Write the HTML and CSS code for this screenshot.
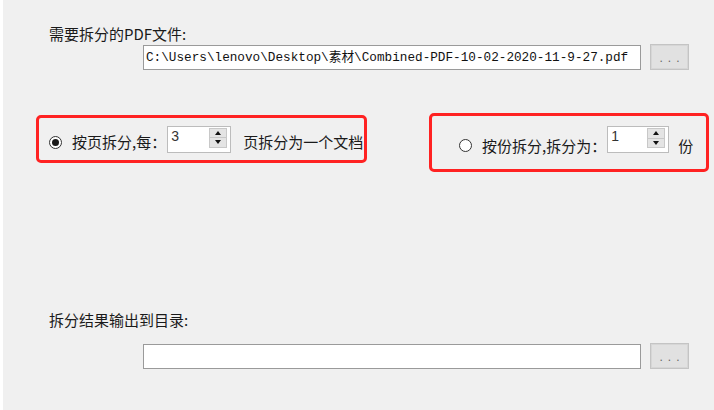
FILE: index.html
```html
<!DOCTYPE html>
<html lang="zh-CN">
<head>
<meta charset="utf-8">
<title>PDF拆分</title>
<link rel="stylesheet" href="styles.css">
</head>
<body>
<div class="page">
  <div class="label label-src">需要拆分的PDF文件:</div>
  <div class="file-row">
    <div class="path-input">C:\Users\lenovo\Desktop\素材\Combined-PDF-10-02-2020-11-9-27.pdf</div>
    <div class="browse-btn">...</div>
  </div>

  <div class="options">
    <div class="opt opt-page">
      <span class="radio checked"></span>
      <span class="opt-text">按页拆分,每：</span>
      <div class="spinner spinner-page">
        <span class="spin-value">3</span>
        <span class="spin-btns">
          <span class="spin-up"></span>
          <span class="spin-down"></span>
        </span>
      </div>
      <span class="opt-text after-page">页拆分为一个文档</span>
    </div>
    <div class="opt opt-copy">
      <span class="radio"></span>
      <span class="opt-text">按份拆分,拆分为：</span>
      <div class="spinner spinner-copy">
        <span class="spin-value">1</span>
        <span class="spin-btns">
          <span class="spin-up"></span>
          <span class="spin-down"></span>
        </span>
      </div>
      <span class="opt-text after-copy">份</span>
    </div>
  </div>

  <div class="label label-out">拆分结果输出到目录:</div>
  <div class="file-row out-row">
    <div class="path-input"></div>
    <div class="browse-btn">...</div>
  </div>
</div>
</body>
</html>
```
FILE: styles.css
```css
html, body {
  margin: 0;
  padding: 0;
  width: 714px;
  height: 410px;
  overflow: hidden;
  background: #f0f0f0;
}

.page {
  box-sizing: border-box;
  width: 714px;
  height: 410px;
  border-left: 3px solid #ffffff;
  background: #f0f0f0;
  padding-top: 24px;
  font-family: "Noto Sans CJK SC", "Noto Sans", sans-serif;
  color: #1a1a1a;
}

.label {
  font-size: 15px;
  line-height: 20px;
  height: 20px;
  margin-left: 46px;
}

.file-row {
  display: flex;
  align-items: flex-start;
  margin-left: 140px;
  height: 26px;
}

.path-input {
  box-sizing: border-box;
  width: 498px;
  height: 25px;
  margin-top: 1px;
  background: #ffffff;
  border: 1px solid #9a9a9a;
  padding-left: 2px;
  font-family: "Liberation Mono", "Noto Sans CJK SC", monospace;
  font-size: 12.7px;
  line-height: 23px;
  white-space: nowrap;
  overflow: hidden;
  color: #111;
}

.browse-btn {
  box-sizing: border-box;
  width: 39px;
  height: 26px;
  margin-left: 9px;
  background: #e1e1e1;
  border: 1px solid #c4c4c4;
  box-shadow: inset 0 0 0 1px #d6d6d6;
  text-align: center;
  font-family: "Liberation Sans", sans-serif;
  font-size: 12px;
  line-height: 26px;
  letter-spacing: 5px;
  padding-left: 5px;
  color: #666;
}

.options {
  display: flex;
  align-items: flex-start;
  margin-top: 43px;
  height: 59px;
}

.opt {
  box-sizing: border-box;
  display: flex;
  align-items: center;
  border: 3px solid #ff2222;
  border-radius: 5px;
  font-size: 15px;
  white-space: nowrap;
}

.opt-page {
  width: 331px;
  height: 48px;
  margin-left: 33px;
  margin-top: 2px;
  padding-left: 10px;
}

.opt-copy {
  width: 280px;
  height: 59px;
  margin-left: 62px;
  padding-left: 27px;
}

.radio {
  box-sizing: border-box;
  width: 13px;
  height: 13px;
  border: 1px solid #333;
  border-radius: 50%;
  background: #ffffff;
  display: flex;
  align-items: center;
  justify-content: center;
  margin-top: 6px;
  flex: none;
}

.radio.checked::after {
  content: "";
  width: 7px;
  height: 7px;
  border-radius: 50%;
  background: #1a1a1a;
}

.opt-text {
  margin-left: 10px;
  line-height: 20px;
  margin-top: 6px;
}

.spinner {
  box-sizing: border-box;
  display: flex;
  align-items: flex-start;
  height: 27px;
  background: #ffffff;
  border: 1px solid #bcbcbc;
  padding: 1px 2px 0 2px;
  flex: none;
}

.spinner-page {
  width: 64px;
  margin-left: 1px;
}

.spinner-copy {
  width: 62px;
  margin-left: 1px;
  margin-bottom: 6px;
}

.spin-value {
  flex: 1;
  font-family: "Liberation Sans", sans-serif;
  font-size: 14px;
  line-height: 17px;
  color: #333;
  padding-left: 1px;
}

.spin-btns {
  display: flex;
  flex-direction: column;
  width: 18px;
  height: 20px;
  margin-right: 1px;
}

.spin-up, .spin-down {
  box-sizing: border-box;
  flex: 1;
  background: #e4e4e4;
  border: 1px solid #c8c8c8;
  display: flex;
  align-items: center;
  justify-content: center;
}

.spin-down {
  border-top: none;
}

.spin-up::after {
  content: "";
  border-left: 3.5px solid transparent;
  border-right: 3.5px solid transparent;
  border-bottom: 4px solid #111;
}

.spin-down::after {
  content: "";
  border-left: 3.5px solid transparent;
  border-right: 3.5px solid transparent;
  border-top: 4px solid #111;
}

.after-page {
  margin-left: 12px;
}

.after-copy {
  margin-left: 9px;
}

.label-out {
  margin-top: 138px;
}

.out-row {
  margin-top: 13px;
}
```
